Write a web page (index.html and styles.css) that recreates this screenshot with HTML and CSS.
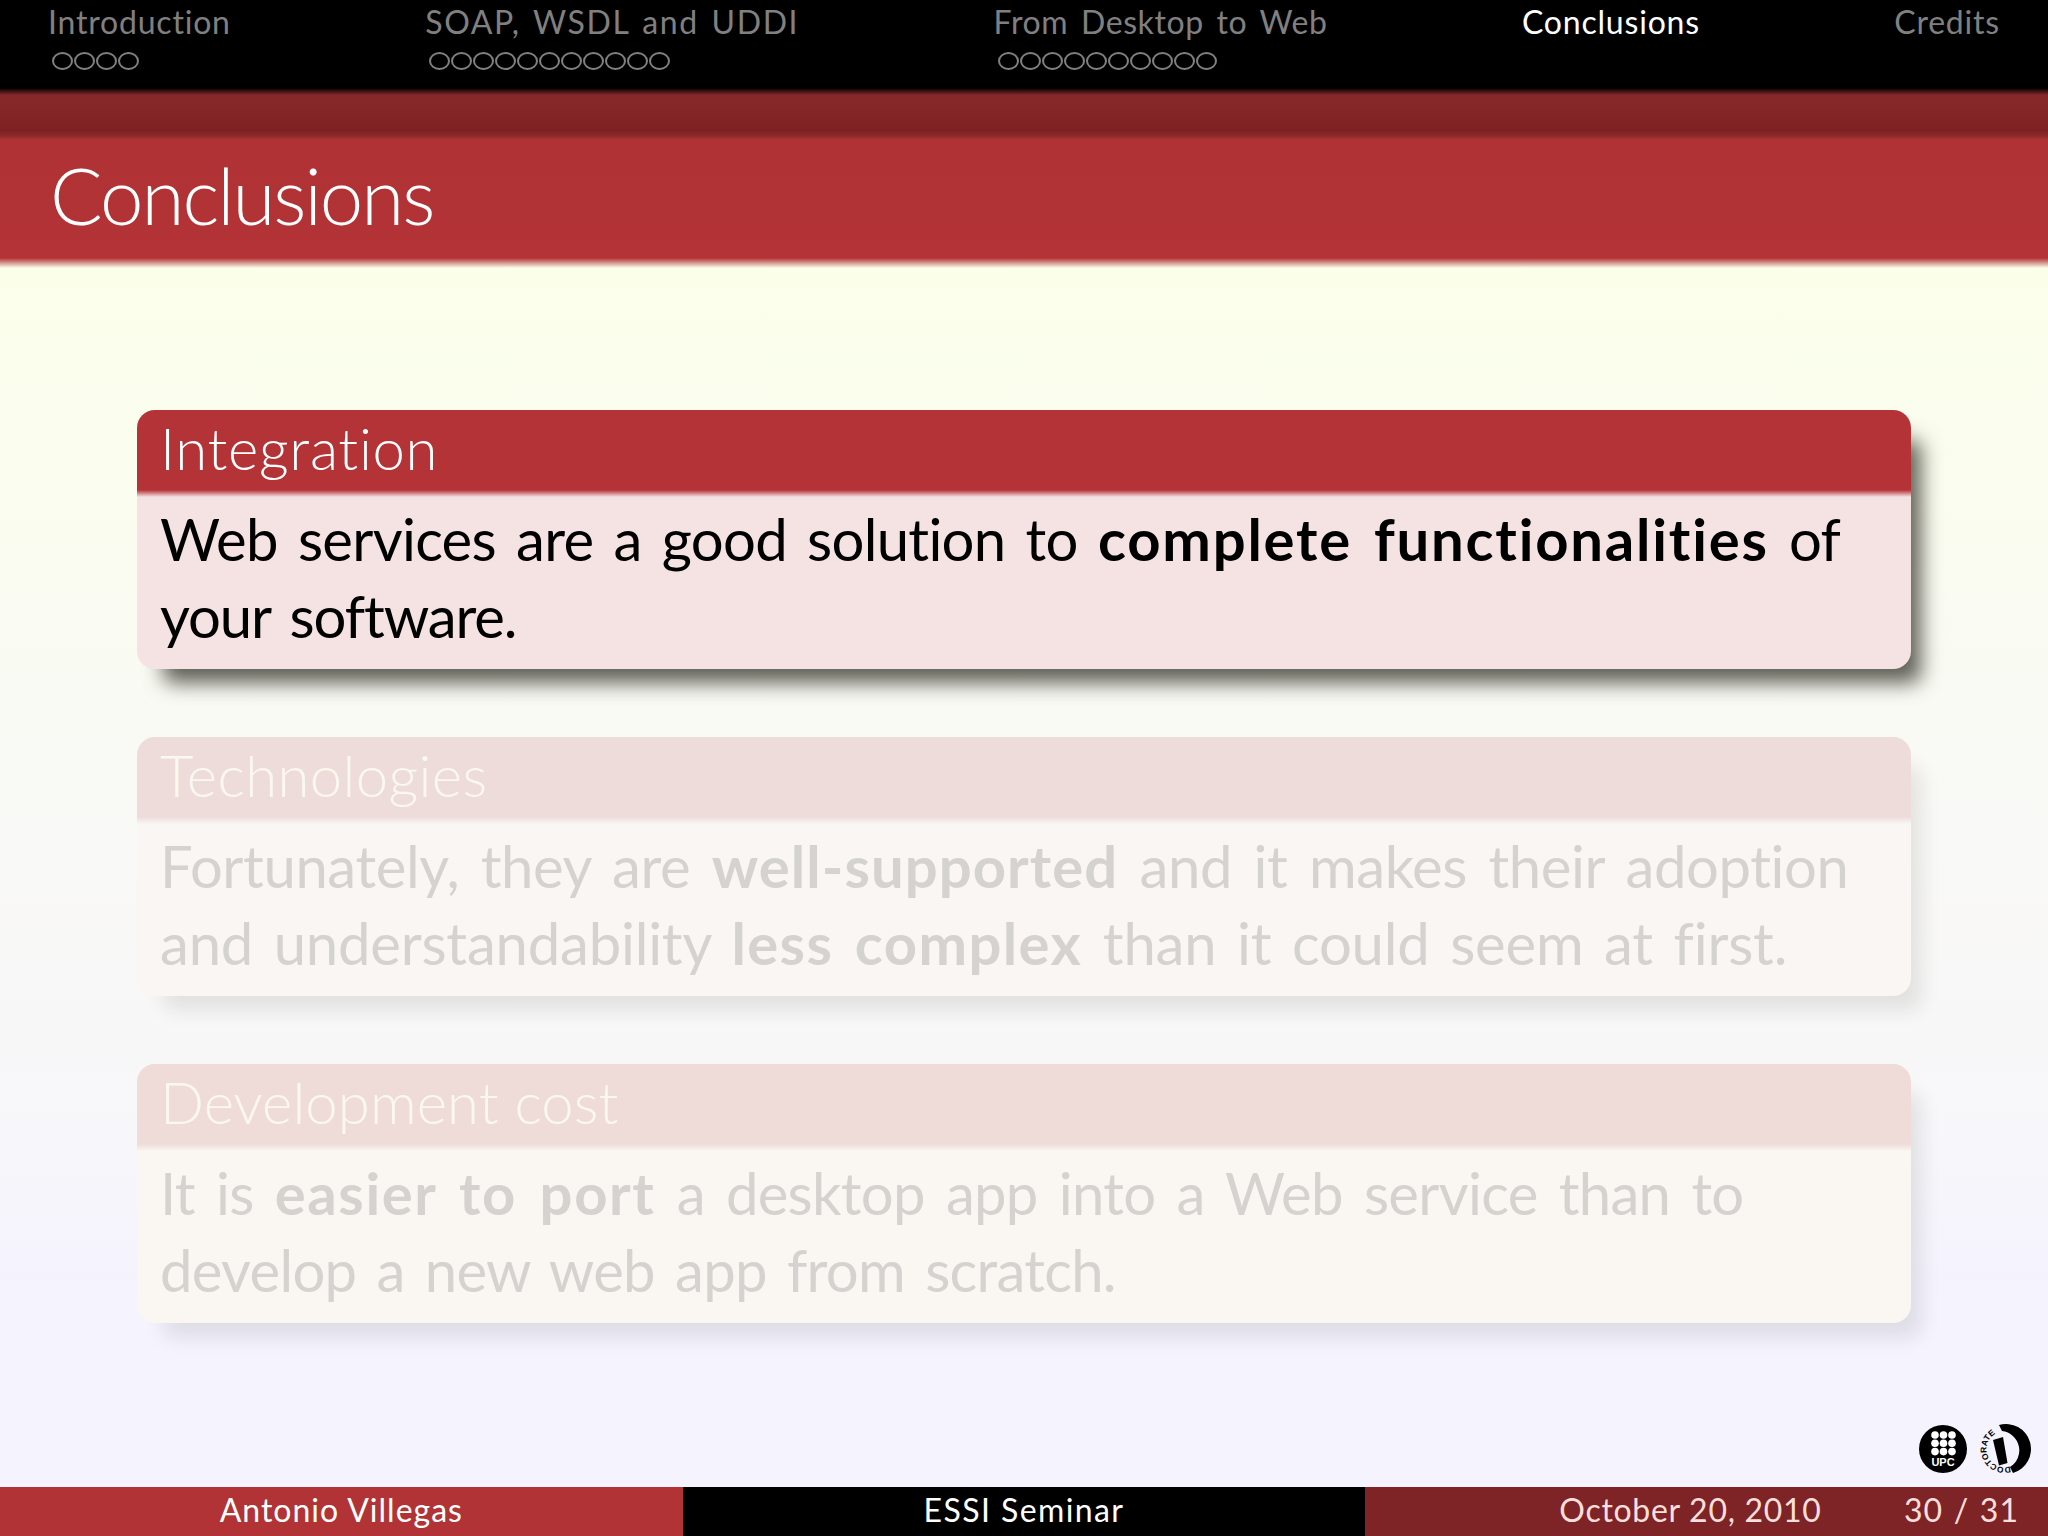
FILE: index.html
```html
<!DOCTYPE html>
<html lang="en">
<head>
<meta charset="utf-8">
<title>Conclusions</title>
<link rel="stylesheet" href="styles.css">
</head>
<body>
<div class="slide">
  <nav class="nav">
    <div class="sec sec-intro"><div class="sec-name">Introduction</div><div class="dots"><i></i><i></i><i></i><i></i></div></div>
    <div class="sec sec-soap"><div class="sec-name">SOAP, WSDL and UDDI</div><div class="dots"><i></i><i></i><i></i><i></i><i></i><i></i><i></i><i></i><i></i><i></i><i></i></div></div>
    <div class="sec sec-desk"><div class="sec-name">From Desktop to Web</div><div class="dots"><i></i><i></i><i></i><i></i><i></i><i></i><i></i><i></i><i></i><i></i></div></div>
    <div class="sec sec-active"><div class="sec-name">Conclusions</div></div>
    <div class="sec sec-cred"><div class="sec-name">Credits</div></div>
  </nav>
  <div class="band"></div>
  <header class="title"><h1>Conclusions</h1></header>
  <main class="main">
    <section class="block">
      <h2 class="block-head h1">Integration</h2>
      <div class="block-body">
        <p class="line l11">Web services are a good solution to <b>complete functionalities</b> of</p>
        <p class="line l12">your software.</p>
      </div>
    </section>
    <section class="block faded">
      <h2 class="block-head h2">Technologies</h2>
      <div class="block-body">
        <p class="line l21">Fortunately, they are <b>well-supported</b> and it makes their adoption</p>
        <p class="line l22">and understandability <b>less complex</b> than it could seem at first.</p>
      </div>
    </section>
    <section class="block faded faded-low">
      <h2 class="block-head h3">Development cost</h2>
      <div class="block-body">
        <p class="line l31">It is <b>easier to port</b> a desktop app into a Web service than to</p>
        <p class="line l32">develop a new web app from scratch.</p>
      </div>
    </section>
  </main>
  <div class="logos">
    <svg class="logo-upc" viewBox="0 0 48 48" width="48" height="48" aria-label="UPC">
      <circle cx="24" cy="24" r="24" fill="#000"/>
      <g fill="#fff">
        <circle cx="16" cy="10" r="3.8"/><circle cx="24.5" cy="10" r="3.8"/><circle cx="33" cy="10" r="3.8"/>
        <circle cx="16" cy="18.3" r="3.8"/><circle cx="24.5" cy="18.3" r="3.8"/><circle cx="33" cy="18.3" r="3.8"/>
        <circle cx="16" cy="26.6" r="3.8"/><circle cx="24.5" cy="26.6" r="3.8"/><circle cx="33" cy="26.6" r="3.8"/>
      </g>
      <text class="upc-text" x="24" y="41" text-anchor="middle">UPC</text>
    </svg>
    <svg class="logo-doc" viewBox="0 0 54 52" width="54" height="52" aria-label="Doctorate">
      <path d="M21 2 A25 25 0 0 1 35 50 L32 44 A19.500 19.500 0 0 0 24 8 Z" fill="#000"/>
      <path d="M15 17 L25 14 L29.500 40 L21 42.500 Z" fill="#000"/>
      <defs><path id="docarc" d="M32 43.300 A18 18 0 1 1 21 9"/></defs>
      <text class="doc-text"><textPath href="#docarc">DOCTORATE</textPath></text>
    </svg>
  </div>
  <footer class="foot">
    <div class="foot-cell foot-a">Antonio Villegas</div>
    <div class="foot-cell foot-b">ESSI Seminar</div>
    <div class="foot-cell foot-c"><span class="date">October 20, 2010</span><span class="page">30 / 31</span></div>
  </footer>
</div>
</body>
</html>
```
FILE: styles.css
```css
* { box-sizing: border-box; margin: 0; padding: 0; }
html, body { width: 2048px; height: 1536px; overflow: hidden; }
body { font-family: "Lato", "Open Sans", sans-serif; font-weight: 400; font-variant-ligatures: none; }
.slide {
  position: relative;
  width: 2048px;
  height: 1536px;
  display: flex;
  flex-direction: column;
  background: linear-gradient(#fbffea 0, #fbffea 268px, #f9f9f6 800px, #f8f7f9 1100px, #f4f3fe 1300px);
}
.nav {
  height: 88px;
  flex: none;
  background: #000;
  color: #808080;
  display: flex;
  justify-content: space-between;
  padding: 0 48px;
}
.sec-name { font-size: 32px; line-height: 44px; white-space: nowrap; font-weight: 400; letter-spacing: .8px; }
.sec-soap .sec-name { letter-spacing: 1.6px; word-spacing: 3px; }
.sec-desk .sec-name { letter-spacing: .6px; word-spacing: 4px; }
.sec-active { color: #fff; }
.dots { display: flex; padding-left: 4px; height: 22px; align-items: center; margin-top: 6px; }
.dots i { width: 21px; height: 18px; margin-right: 1px; border: 2px solid #808080; border-radius: 50%; }
.band {
  height: 52px;
  flex: none;
  background: linear-gradient(#000 0, #862829 7px, #862829 16px, #7e2123 42px, #862829 47px, #b03235 52px);
}
.title {
  height: 128px;
  flex: none;
  padding-left: 50px;
  background: linear-gradient(#b03235 0, #b33336 118px, rgba(179,51,54,0) 128px);
}
.title h1 { font-size: 78px; line-height: 90px; padding-top: 10px; font-weight: 300; color: #fff; letter-spacing: -2px; }
.main { flex: 1; padding: 142px 137px 0; display: flex; flex-direction: column; gap: 68px; }
.block {
  height: 259px;
  border-radius: 18px;
  background: #f5e2e3;
  box-shadow: 18px 22px 20px -8px rgba(30,30,20,.7);
}
.block-head {
  height: 87px;
  padding-left: 23px;
  border-radius: 18px 18px 0 0;
  background: linear-gradient(#b33336 0, #b33336 80px, rgba(179,51,54,0) 87px);
  color: #fff;
  font-size: 58px;
  font-weight: 300;
  line-height: 76px;
}
.h1 { letter-spacing: .7px; }
.h2 { letter-spacing: .4px; }
.h3 { letter-spacing: .1px; }
.block-body { padding: 3px 0 0 23px; color: #000; font-size: 58px; font-weight: 400; }
.line { line-height: 77px; white-space: nowrap; letter-spacing: -.7px; word-spacing: 6px; }
.line b { font-weight: 700; letter-spacing: 1.4px; }
.l11 b { letter-spacing: 1.8px; }
.l12 { letter-spacing: -1.1px; }
.l21 { letter-spacing: -.4px; word-spacing: 7px; }
.l21 b { letter-spacing: 1.05px; }
.l22 { letter-spacing: -.2px; }
.l31 { letter-spacing: -.7px; word-spacing: 7px; }
.l31 b { letter-spacing: 1.6px; }
.faded { background: #f9f6f3; box-shadow: 18px 22px 20px -8px rgba(30,30,20,.1); }
.faded .block-head { background: linear-gradient(#eedcdb 0, #eedcdb 80px, #f9f6f3 87px); color: #fbf8ed; }
.faded .block-body { color: #d5d3d0; }
.faded-low { background: #faf6f2; }
.faded-low .block-head { background: linear-gradient(#efdcd8 0, #efdcd8 80px, #faf6f2 87px); }
.logos {
  position: absolute;
  right: 16px;
  top: 1423px;
  display: flex;
  align-items: center;
  gap: 11px;
}
.upc-text { font-family: "Liberation Sans", sans-serif; font-weight: 700; font-size: 11px; fill: #fff; }
.doc-text { font-family: "Liberation Sans", sans-serif; font-weight: 700; font-size: 8.4px; fill: #000; }
.foot { height: 49px; flex: none; display: flex; font-size: 32px; line-height: 45px; font-weight: 400; letter-spacing: 1px; }
.foot-cell { flex: 0 0 33.3333%; text-align: center; color: #fff; white-space: nowrap; }
.foot-a { background: #b13335; }
.foot-b { background: #000; letter-spacing: 1.4px; }
.foot-c {
  background: #7f2426;
  color: #fadfdd;
  display: flex;
  justify-content: space-between;
  padding: 0 29px 0 194px;
}
.date { letter-spacing: .7px; }
.page { word-spacing: 1.5px; }
```
